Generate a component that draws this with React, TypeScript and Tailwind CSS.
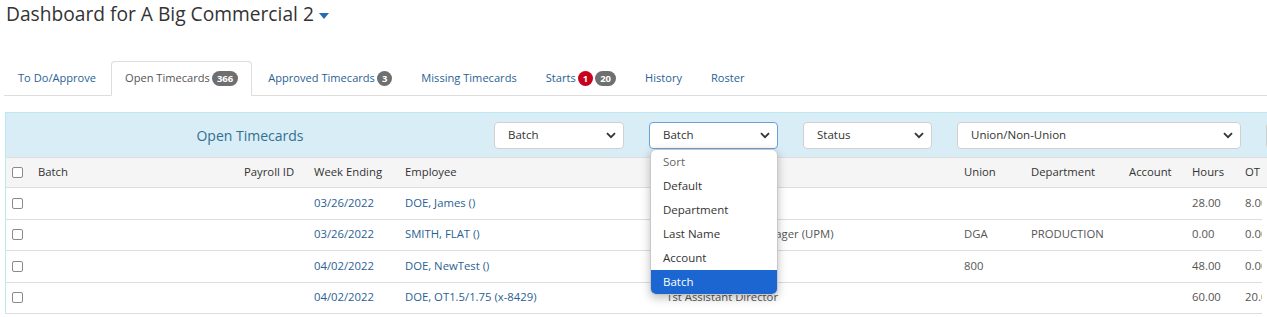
import * as React from "react";

type Row = {
  week: string;
  employee: string;
  occupation: string;
  union: string;
  department: string;
  hours: string;
  ot: string;
};

const rows: Row[] = [
  { week: "03/26/2022", employee: "DOE, James ()", occupation: "", union: "", department: "", hours: "28.00", ot: "8.00" },
  { week: "03/26/2022", employee: "SMITH, FLAT ()", occupation: "Unit Production Manager (UPM)", union: "DGA", department: "PRODUCTION", hours: "0.00", ot: "0.00" },
  { week: "04/02/2022", employee: "DOE, NewTest ()", occupation: "Misc. Pos. in Industry", union: "800", department: "", hours: "48.00", ot: "0.00" },
  { week: "04/02/2022", employee: "DOE, OT1.5/1.75 (x-8429)", occupation: "1st Assistant Director", union: "", department: "", hours: "60.00", ot: "20.00" },
];

const sortOptions = ["Default", "Department", "Last Name", "Account", "Batch"];

function Badge({ children, red }: { children: React.ReactNode; red?: boolean }) {
  return (
    <span
      className={`ml-[2px] inline-flex h-[15px] min-w-[15px] items-center justify-center rounded-full px-[5px] text-[9.5px] font-bold leading-none text-white ${
        red ? "bg-[#c9001b]" : "bg-[#6f6f6f]"
      }`}
    >
      {children}
    </span>
  );
}

function Chevron() {
  return (
    <svg width="10" height="7" viewBox="0 0 10 7" className="shrink-0">
      <path d="M1 1.2 5 5.2 9 1.2" fill="none" stroke="#333" strokeWidth="1.8" />
    </svg>
  );
}

function Select({ label, width, focused }: { label: string; width: string; focused?: boolean }) {
  return (
    <div
      className={`flex h-[27px] items-center justify-between rounded-[4px] border bg-white pl-[13px] pr-[7px] text-[11.5px] text-[#333] ${width} ${
        focused ? "border-[#6b9fd8]" : "border-[#d0d0d0]"
      }`}
    >
      <span>{label}</span>
      <Chevron />
    </div>
  );
}

function Check() {
  return <span className="block h-[11px] w-[11px] rounded-[2px] border border-[#8a8a8a] bg-white" />;
}

function Cells({ cells }: { cells: React.ReactNode[] }) {
  const widths = [
    "w-[25px] pl-[6px]",
    "w-[205px] pl-[7px]",
    "w-[70px] pl-[8px]",
    "w-[91px] pl-[8px]",
    "w-[261px] pl-[8px]",
    "w-[298px] pl-[8px]",
    "w-[67px] pl-[8px]",
    "w-[98px] pl-[8px]",
    "w-[63px] pl-[8px]",
    "w-[53px] pl-[8px]",
    "w-[60px] pl-[8px]",
  ];
  return (
    <>
      {cells.map((c, i) => (
        <div key={i} className={`${widths[i]} shrink-0 whitespace-nowrap`}>
          {c}
        </div>
      ))}
    </>
  );
}

export default function App() {
  const tab = "mr-[2px] flex h-[35px] items-center pl-[14px] pr-[13px] text-[#2a5f94]";
  return (
    <div className="h-[317px] w-[1267px] overflow-hidden bg-white font-['Open_Sans',sans-serif] text-[#333]">
      <div className="flex h-[28px] items-center pl-[6px]">
        <h1 className="text-[19.2px] leading-[28px] text-[#333]">Dashboard for A Big Commercial 2</h1>
        <svg width="10" height="6" viewBox="0 0 10 6" className="ml-[5px] mt-[3px]">
          <path d="M0 0h10L5 6z" fill="#2a6ab0" />
        </svg>
      </div>

      <div className="ml-[4px] mt-[33px] flex h-[35px] border-b border-[#dddddd] text-[11.1px]">
        <div className="mr-[2px] flex h-[35px] items-center pl-[14px] pr-[13px] text-[#2a5f94]">To Do/Approve</div>
        <div className="mr-[2px] flex h-[35px] items-center rounded-t-[4px] border border-b-white border-[#dddddd] bg-white px-[13px] text-[#555]">
          Open Timecards<Badge>366</Badge>
        </div>
        <div className={tab}>
          Approved Timecards<Badge>3</Badge>
        </div>
        <div className={tab}>Missing Timecards</div>
        <div className={tab}>
          Starts<Badge red>1</Badge>
          <Badge>20</Badge>
        </div>
        <div className={tab}>History</div>
        <div className={tab}>Roster</div>
      </div>

      <div className="ml-[5px] mt-[16px] w-[1400px] border-l border-t border-[#bce8f1]">
        <div className="flex h-[44px] items-center bg-[#d9edf7]">
          <div className="w-[488px] text-center text-[14px] text-[#31708f]">Open Timecards</div>
          <div className="flex items-center gap-[25px]">
            <Select label="Batch" width="w-[130px]" />
            <div className="relative">
              <Select label="Batch" width="w-[129px]" focused />
              <div className="absolute left-[1px] top-[27px] z-10 w-[128px] overflow-hidden rounded-[6px] border border-[#c8c8c8] bg-white text-[11.5px] shadow-[0_3px_10px_rgba(0,0,0,0.25)]">
                <div className="flex h-[24px] items-center pl-[12px] text-[#666]">Sort</div>
                {sortOptions.map((o) => (
                  <div
                    key={o}
                    className={`flex h-[24px] items-center pl-[12px] ${
                      o === "Batch" ? "bg-[#1b66d1] text-white" : "text-[#333]"
                    }`}
                  >
                    {o}
                  </div>
                ))}
              </div>
            </div>
            <Select label="Status" width="w-[129px]" />
            <Select label="Union/Non-Union" width="w-[284px]" />
            <Select label="Location" width="w-[130px]" />
          </div>
        </div>

        <div className="flex h-[31px] items-center border-b border-t border-[#dddddd] bg-[#f5f5f5] text-[11.3px] text-[#333]">
          <Cells
            cells={[
              <Check />,
              "Batch",
              "Payroll ID",
              "Week Ending",
              "Employee",
              "Occupation",
              "Union",
              "Department",
              "Account",
              "Hours",
              "OT",
            ]}
          />
        </div>

        <div className="w-[1256px] overflow-hidden">
          {rows.map((r, i) => (
            <div key={i} className="flex h-[31.5px] w-[1400px] items-center border-b border-[#dddddd] text-[11.3px] text-[#555]">
              <Cells
                cells={[
                  <Check />,
                  "",
                  "",
                  <span className="text-[#2a5f94]">{r.week}</span>,
                  <span className="text-[#2a5f94]">{r.employee}</span>,
                  r.occupation,
                  r.union,
                  r.department,
                  "",
                  r.hours,
                  r.ot,
                ]}
              />
            </div>
          ))}
        </div>
      </div>
    </div>
  );
}
